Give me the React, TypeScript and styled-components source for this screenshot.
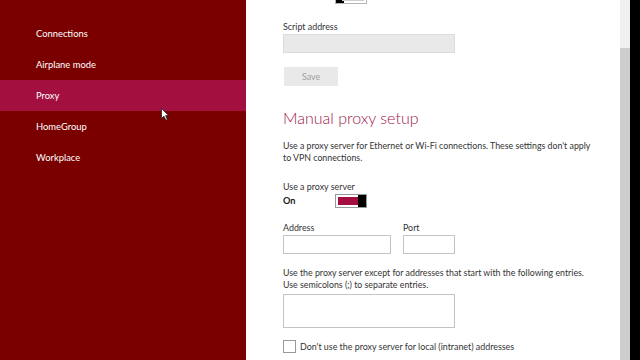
import styled, { createGlobalStyle } from 'styled-components';

const GlobalStyle = createGlobalStyle`
    html, body {
        margin: 0;
        padding: 0;
        width: 640px;
        height: 360px;
        overflow: hidden;
        font-family: Lato, "Open Sans", sans-serif;
    }
`;

const navItems = ['Connections', 'Airplane mode', 'Proxy', 'HomeGroup', 'Workplace'];

const App = () => {
    return (
        <Screen>
            <GlobalStyle />
            <Sidebar>
                {navItems.map((item) => (
                    <NavItem key={item} $active={item === 'Proxy'}>
                        {item}
                    </NavItem>
                ))}
                <Cursor viewBox="0 0 8 13" width="8" height="13">
                    <path d="M0.5 0.5 L0.5 10.5 L3 8.2 L4.8 12.2 L6.3 11.5 L4.6 7.6 L7.6 7.6 Z" fill="#fff" stroke="#222" strokeWidth="0.8" />
                </Cursor>
            </Sidebar>
            <Main>
                <Content>
                    <ToggleRow>
                        <StateText>Off</StateText>
                        <Toggle $on={false}>
                            <Track $on={false} />
                            <Thumb />
                        </Toggle>
                    </ToggleRow>

                    <FieldLabel $top={17}>Script address</FieldLabel>
                    <TextBox $width={172} $disabled />
                    <SaveButton>Save</SaveButton>

                    <Heading>Manual proxy setup</Heading>
                    <Paragraph>
                        Use a proxy server for Ethernet or Wi-Fi connections. These settings don't apply
                        <br />
                        to VPN connections.
                    </Paragraph>

                    <FieldLabel $top={17}>Use a proxy server</FieldLabel>
                    <ToggleRow $top={1}>
                        <StateText $bold>On</StateText>
                        <Toggle $on>
                            <Track $on />
                            <Thumb />
                        </Toggle>
                    </ToggleRow>

                    <FieldRow>
                        <Field>
                            <FieldLabel $top={0}>Address</FieldLabel>
                            <TextBox $width={108} />
                        </Field>
                        <Field>
                            <FieldLabel $top={0}>Port</FieldLabel>
                            <TextBox $width={52} />
                        </Field>
                    </FieldRow>

                    <Paragraph $top={13}>
                        Use the proxy server except for addresses that start with the following entries.
                        <br />
                        Use semicolons (;) to separate entries.
                    </Paragraph>
                    <TextArea />

                    <CheckRow>
                        <CheckBox />
                        <CheckText>Don't use the proxy server for local (intranet) addresses</CheckText>
                    </CheckRow>
                </Content>
            </Main>
            <ScrollBar>
                <ScrollThumb />
            </ScrollBar>
            <Edge />
        </Screen>
    );
};

const Screen = styled.div`
    display: flex;
    width: 640px;
    height: 360px;
    overflow: hidden;
`;

const Sidebar = styled.nav`
    position: relative;
    width: 246px;
    flex-shrink: 0;
    background: #7a0000;
    padding-top: 18px;
    box-sizing: border-box;
`;

const NavItem = styled.div<{ $active?: boolean }>`
    height: 31px;
    line-height: 31px;
    padding-left: 36px;
    font-size: 9.4px;
    color: #fff;
    background: ${(p) => (p.$active ? '#a3103f' : 'transparent')};
`;

const Cursor = styled.svg`
    position: absolute;
    left: 161px;
    top: 108px;
`;

const Main = styled.main`
    flex: 1;
    background: #fff;
    overflow: hidden;
`;

const Content = styled.div`
    padding-left: 37px;
    margin-top: -11px;
    color: #333;
`;

const ToggleRow = styled.div<{ $top?: number }>`
    display: flex;
    align-items: center;
    height: 15px;
    margin-top: ${(p) => p.$top ?? 0}px;
`;

const StateText = styled.span<{ $bold?: boolean }>`
    width: 52px;
    font-size: 9.2px;
    font-weight: ${(p) => (p.$bold ? 700 : 400)};
    color: #222;
`;

const Toggle = styled.div<{ $on: boolean }>`
    display: flex;
    width: 32px;
    height: 14px;
    box-sizing: border-box;
    border: 1px solid ${(p) => (p.$on ? '#9a9a9a' : '#b5b5b5')};
    padding: 2px;
    background: #fff;
    flex-direction: ${(p) => (p.$on ? 'row' : 'row-reverse')};
`;

const Track = styled.div<{ $on: boolean }>`
    flex: 1;
    background: ${(p) => (p.$on ? '#a3103f' : '#cfcfcf')};
`;

const Thumb = styled.div`
    width: 8px;
    margin: -2px;
    background: #000;
`;

const FieldLabel = styled.div<{ $top: number }>`
    margin-top: ${(p) => p.$top}px;
    font-size: 8.9px;
    line-height: 11px;
    color: #333;
`;

const TextBox = styled.div<{ $width: number; $disabled?: boolean }>`
    width: ${(p) => p.$width}px;
    height: 19px;
    margin-top: 2px;
    box-sizing: border-box;
    border: 1px solid ${(p) => (p.$disabled ? '#dcdcdc' : '#c4c4c4')};
    background: ${(p) => (p.$disabled ? '#e9e9e9' : '#fff')};
`;

const SaveButton = styled.div`
    width: 54px;
    height: 19px;
    margin-top: 14px;
    margin-left: 1px;
    background: #e9e9e9;
    color: #a0a0a0;
    font-size: 8.9px;
    line-height: 19px;
    text-align: center;
`;

const Heading = styled.h1`
    margin: 20px 0 0;
    font-size: 16px;
    line-height: 24px;
    font-weight: 300;
    color: #9e1746;
`;

const Paragraph = styled.p<{ $top?: number }>`
    margin: ${(p) => p.$top ?? 10}px 0 0;
    white-space: nowrap;
    font-size: 8.8px;
    line-height: 12px;
    color: #333;
`;

const FieldRow = styled.div`
    display: flex;
    gap: 12px;
    margin-top: 14px;
`;

const Field = styled.div`
    display: flex;
    flex-direction: column;
`;

const TextArea = styled.div`
    width: 172px;
    height: 34px;
    margin-top: 3px;
    box-sizing: border-box;
    border: 1px solid #c4c4c4;
`;

const CheckRow = styled.div`
    display: flex;
    align-items: center;
    gap: 4px;
    margin-top: 12px;
`;

const CheckBox = styled.div`
    width: 13px;
    height: 13px;
    box-sizing: border-box;
    border: 1px solid #9a9a9a;
`;

const CheckText = styled.span`
    font-size: 8.9px;
    color: #333;
`;

const ScrollBar = styled.div`
    width: 10px;
    flex-shrink: 0;
    background: #f0f0f0;
    padding-top: 48px;
    box-sizing: border-box;
`;

const ScrollThumb = styled.div`
    height: 100%;
    background: #cdcdcd;
`;

const Edge = styled.div`
    width: 10px;
    flex-shrink: 0;
    background: #000;
`;

export default App;
